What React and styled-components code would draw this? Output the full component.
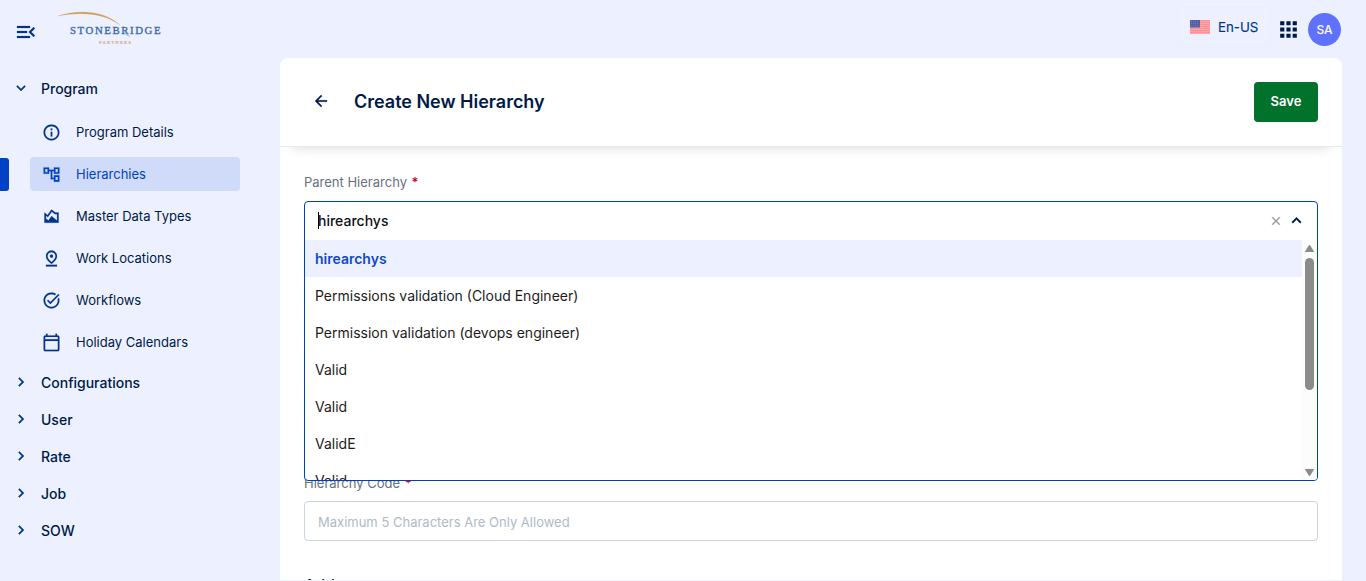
import React from "react";
import styled, { createGlobalStyle } from "styled-components";
import {
  MdMenuOpen, MdOutlineInfo, MdOutlineAccountTree, MdOutlineAreaChart,
  MdOutlinePinDrop, MdTaskAlt, MdOutlineCalendarToday, MdApps,
  MdExpandMore, MdExpandLess, MdChevronRight, MdArrowBack, MdClose,
} from "react-icons/md";

const Global = createGlobalStyle`
  *, *::before, *::after { box-sizing: border-box; }
  body {
    margin: 0;
    background: #edf1ff;
    color: #001a48;
    font-family: Inter, "Liberation Sans", sans-serif;
    font-size: 14px;
    overflow: hidden;
  }
  /* The icons carry an unfilled bounding box that must not pick up a stroke. */
  svg [fill="none"] { stroke: none; }
`;

const Page = styled.div`
  display: flex;
  flex-direction: column;
  height: 581px;
  overflow: hidden;
`;

const TopBar = styled.header`
  display: flex;
  align-items: flex-start;
  justify-content: space-between;
  height: 58px;
  flex: none;
  padding: 0 25px 0 14px;
`;

const Brand = styled.div`
  display: flex;
  align-items: flex-start;
  gap: 19px;
  color: #00358e;
`;

const MenuToggle = styled(MdMenuOpen)`
  width: 24px;
  height: 24px;
  margin-top: 20px;
  stroke: currentColor;
  stroke-width: 0.2px;
`;

const Tools = styled.div`
  display: flex;
  align-items: center;
  height: 58px;
`;

const Locale = styled.button`
  display: flex;
  align-items: center;
  gap: 8px;
  width: 94px;
  height: 40px;
  margin: 0 5px 4px 0;
  padding: 0 0 0 12px;
  border: 1px solid #eaeef8;
  border-radius: 4px;
  background: none;
  color: #00358e;
  font: 400 13.3px Inter, sans-serif;
  -webkit-text-stroke: 0.15px;
`;

const AppsIcon = styled(MdApps)`
  width: 25px;
  height: 25px;
  margin: 1px 7px 0 0;
  color: #001a48;
`;

const Avatar = styled.div`
  display: grid;
  place-items: center;
  width: 33px;
  height: 33px;
  border-radius: 50%;
  background: #5f72ff;
  color: #fff;
  font-size: 12px;
  font-weight: 500;
`;

const Body = styled.div`
  display: flex;
  flex: 1;
  min-height: 0;
`;

const Sidebar = styled.nav`
  width: 280px;
  flex: none;
  padding-top: 12px;
`;

const Group = styled.div`
  display: flex;
  align-items: center;
  gap: 11px;
  height: 37px;
  padding-left: 12px;
  font-size: 14px;
  font-weight: 500;
  svg {
    width: 18px;
    height: 18px;
    margin-bottom: ${(p) => (p.$open ? 1 : 2)}px;
    color: #00358e;
    stroke: currentColor;
    stroke-width: 0.5px;
  }
`;

const SubMenu = styled.div`
  display: flex;
  flex-direction: column;
  gap: 8px;
  padding: 8px 0 5px;
`;

const ItemRow = styled.div`
  display: flex;
  align-items: center;
  gap: 21px;
  height: 34px;
`;

const Marker = styled.span`
  width: 9px;
  height: 33px;
  border-radius: 0 3px 3px 0;
  background: ${(p) => (p.$active ? "#0042c5" : "transparent")};
`;

const Item = styled.a`
  display: flex;
  align-items: center;
  gap: 15px;
  width: 210px;
  height: 34px;
  padding-left: 12px;
  border-radius: 4px;
  font-size: 13px;
  color: ${(p) => (p.$active ? "#0042c5" : "#001a48")};
  background: ${(p) => (p.$active ? "#d0dbfa" : "transparent")};
  svg {
    width: 19px;
    height: 19px;
    flex: none;
    color: ${(p) => (p.$active ? "#0042c5" : "#00358e")};
    stroke: currentColor;
    stroke-width: 0.2px;
  }
`;

const Card = styled.main`
  display: flex;
  flex-direction: column;
  width: 1062px;
  height: 522px;
  overflow: hidden;
  border-radius: 8px 8px 0 0;
  background: #fff;
`;

const CardHeader = styled.div`
  display: flex;
  align-items: center;
  flex: none;
  height: 89px;
  padding: 0 24px 0 32px;
  border-bottom: 1px solid #e6ebf3;
  box-shadow: 0 12px 12px -12px rgba(0, 0, 0, 0.16);
`;

const BackIcon = styled(MdArrowBack)`
  width: 18px;
  height: 18px;
  margin-bottom: 2px;
  stroke: currentColor;
  stroke-width: 0.4px;
`;

const Title = styled.h1`
  flex: 1;
  margin: 0 0 2px 24px;
  font-size: 18px;
  font-weight: 600;
  letter-spacing: -0.01px;
`;

const SaveButton = styled.button`
  width: 64px;
  height: 40px;
  padding: 0 0 2px;
  border: 0;
  border-radius: 4px;
  background: #00722b;
  color: #fff;
  font: 600 13px Inter, sans-serif;
`;

const Form = styled.div`
  display: flex;
  flex-direction: column;
  padding: 26px 24px 0;
`;

const Field = styled.div`
  display: flex;
  flex-direction: column;
  gap: ${(p) => p.$gap}px;
  margin-bottom: ${(p) => p.$after}px;
`;

const Label = styled.label`
  height: 19px;
  line-height: 19px;
  font-size: 13px;
  color: #66707f;
  b { color: #d0021b; font-weight: 600; margin-left: 1px; }
`;

const SelectAnchor = styled.div`
  position: relative;
  height: 40px;
`;

const SelectPanel = styled.div`
  position: absolute;
  inset: 0 0 auto 0;
  height: 280px;
  display: flex;
  flex-direction: column;
  border: 1px solid #0042b6;
  border-radius: 4px;
  background: #fff;
  overflow: hidden;
`;

const SelectValue = styled.div`
  display: flex;
  align-items: center;
  flex: none;
  height: 38px;
  padding: 0 11px 2px 13px;
  color: #111;
  font-size: 14px;
  font-weight: 500;
`;

const Caret = styled.span`
  width: 1px;
  height: 17px;
  margin-right: -1px;
  background: #000;
`;

const ValueText = styled.span`
  flex: 1;
`;

const ClearIcon = styled(MdClose)`
  width: 14px;
  height: 14px;
  margin: 1px 4px 0 0;
  color: #999;
  stroke: currentColor;
  stroke-width: 0.6px;
`;

const CollapseIcon = styled(MdExpandLess)`
  width: 19px;
  height: 19px;
  color: #001a48;
  stroke: currentColor;
  stroke-width: 0.6px;
`;

const ListArea = styled.div`
  display: flex;
  flex: 1;
  min-height: 0;
`;

const Options = styled.div`
  flex: 1;
  overflow: hidden;
`;

const Option = styled.div`
  height: 37px;
  padding-left: 10px;
  line-height: 38px;
  font-size: 14px;
  font-weight: ${(p) => (p.$selected ? 600 : 400)};
  color: ${(p) => (p.$selected ? "#1249c2" : "#1c1c1c")};
  background: ${(p) => (p.$selected ? "#edf1ff" : "transparent")};
`;

const ScrollTrack = styled.div`
  display: flex;
  flex-direction: column;
  align-items: center;
  width: 15px;
  padding: 5px 0 4px;
  background: #fcfcfc;
`;

const ScrollThumb = styled.div`
  width: 9px;
  height: 132px;
  margin: 6px 0 auto;
  border-radius: 5px;
  background: #8b8b8b;
`;

const Input = styled.input`
  width: 100%;
  height: 40px;
  padding: 2px 13px 0;
  border: 1px solid #cbd4e1;
  border-radius: 4px;
  font: 400 13px Inter, sans-serif;
  &::placeholder { color: #b0bac7; opacity: 1; }
`;

const SectionTitle = styled.h2`
  margin: 0;
  font-size: 16px;
  line-height: 20px;
  font-weight: 500;
`;

const navItems = [
  { label: "Program Details", icon: MdOutlineInfo },
  { label: "Hierarchies", icon: MdOutlineAccountTree, active: true },
  { label: "Master Data Types", icon: MdOutlineAreaChart },
  { label: "Work Locations", icon: MdOutlinePinDrop },
  { label: "Workflows", icon: MdTaskAlt },
  { label: "Holiday Calendars", icon: MdOutlineCalendarToday },
];

const groups = ["Configurations", "User", "Rate", "Job", "SOW"];

const options = [
  "hirearchys",
  "Permissions validation (Cloud Engineer)",
  "Permission validation (devops engineer)",
  "Valid",
  "Valid",
  "ValidE",
  "Valid",
];

function Logo() {
  return (
    <svg width="112" height="50" viewBox="0 0 112 50">
      <path d="M0.500 16C22 9.500 46 10 63 25C47 13.500 26 11.300 0.500 16Z" fill="#cfa060" stroke="#cfa060" strokeWidth=".2" />
      <text x="13" y="34" fontFamily="Liberation Serif, serif" fontSize="10.800" textLength="90.500" fill="#3d6ba8" stroke="#3d6ba8" strokeWidth=".35">STONEBRIDGE</text>
      <path d="M66 30L74 37.500L69 35Z" fill="#9fb5d6" />
      <text x="42" y="43.700" fontFamily="Liberation Serif, serif" fontSize="4.600" textLength="32" fill="#cdab83" stroke="#cdab83" strokeWidth=".2">PARTNERS</text>
    </svg>
  );
}

function Flag() {
  const stripes = [0, 2, 4, 6, 8, 10, 12];
  return (
    <svg width="20" height="14" viewBox="0 0 20 14">
      <rect width="20" height="14" fill="#ffa5a7" />
      {stripes.map((y) => <rect key={y} y={y} width="20" height="1" fill="#fb9195" />)}
      <rect width="10" height="7.500" fill="#5360a8" />
      {[1.5, 3.5, 5.5].map((y) => (
        <path key={y} d={`M1 ${y}H9`} stroke="#7d85bf" strokeWidth=".7" strokeDasharray="1 1" />
      ))}
    </svg>
  );
}

function Arrow({ down }) {
  return (
    <svg width="9" height="7" viewBox="0 0 9 7">
      <path d={down ? "M0 0.500Q0 0 .5 0H8.500Q9 0 9 .5L5.300 6.500Q4.500 7.400 3.700 6.500Z" : "M0 6.500Q0 7 .5 7H8.500Q9 7 9 6.500L5.300 .5Q4.500 -.4 3.700 .5Z"} fill="#8b8b8b" />
    </svg>
  );
}

export default function App() {
  return (
    <Page>
      <Global />
      <TopBar>
        <Brand>
          <MenuToggle />
          <Logo />
        </Brand>
        <Tools>
          <Locale><Flag />En-US</Locale>
          <AppsIcon />
          <Avatar>SA</Avatar>
        </Tools>
      </TopBar>
      <Body>
        <Sidebar>
          <Group $open><MdExpandMore />Program</Group>
          <SubMenu>
            {navItems.map(({ label, icon: Icon, active }) => (
              <ItemRow key={label}>
                <Marker $active={active} />
                <Item $active={active}><Icon />{label}</Item>
              </ItemRow>
            ))}
          </SubMenu>
          {groups.map((g) => <Group key={g}><MdChevronRight />{g}</Group>)}
        </Sidebar>
        <Card>
          <CardHeader>
            <BackIcon />
            <Title>Create New Hierarchy</Title>
            <SaveButton>Save</SaveButton>
          </CardHeader>
          <Form>
            <Field $gap={9} $after={233}>
              <Label>Parent Hierarchy <b>*</b></Label>
              <SelectAnchor>
                <SelectPanel>
                  <SelectValue>
                    <Caret />
                    <ValueText>hirearchys</ValueText>
                    <ClearIcon />
                    <CollapseIcon />
                  </SelectValue>
                  <ListArea>
                    <Options>
                      {options.map((o, i) => <Option key={i} $selected={i === 0}>{o}</Option>)}
                    </Options>
                    <ScrollTrack>
                      <Arrow />
                      <ScrollThumb />
                      <Arrow down />
                    </ScrollTrack>
                  </ListArea>
                </SelectPanel>
              </SelectAnchor>
            </Field>
            <Field $gap={8} $after={34}>
              <Label>Hierarchy Code <b>*</b></Label>
              <Input placeholder="Maximum 5 Characters Are Only Allowed" />
            </Field>
            <SectionTitle>Address</SectionTitle>
          </Form>
        </Card>
      </Body>
    </Page>
  );
}
